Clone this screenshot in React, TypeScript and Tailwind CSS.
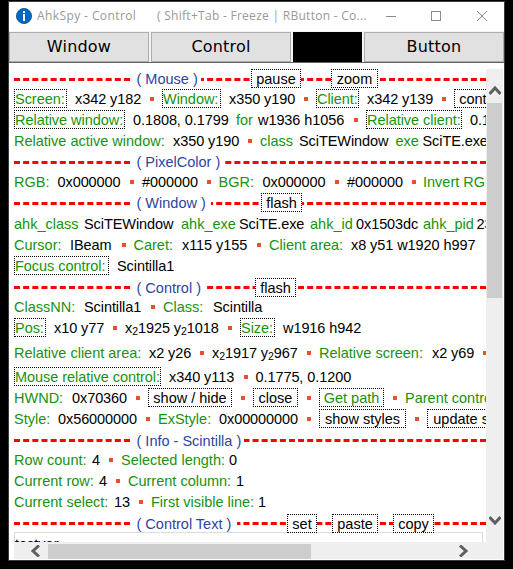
import type { ReactNode } from 'react';

type Kind = 'g' | 'k' | 'dot' | 'label' | 'btn' | 'gbtn';
type Seg = [Kind, string, string];

const styles: Record<Kind, string> = {
  g: 'text-[#189210]',
  k: 'text-black tracking-[-0.08px]',
  dot: 'text-[#e5502f]',
  label: 'text-[#189210] tracking-[-0.04px]',
  btn: 'text-black',
  gbtn: 'text-[#189210]',
};

function withSubscripts(text: string): ReactNode[] {
  return text.split(/(₂)/).map((part, i) =>
    part === '₂' ? (
      <span key={i} className="relative top-[2px] text-[10.5px]">2</span>
    ) : (
      part
    ),
  );
}

// The width class covers the item and the space that follows it.
function Segment({ seg: [kind, text, width] }: { seg: Seg }) {
  if (kind === 'dot') {
    return (
      <span className={`flex h-[19px] shrink-0 pt-2 ${width}`}>
        <span className="h-1 w-1 bg-[#e5502f]" />
      </span>
    );
  }
  if (kind === 'label') {
    return (
      <span className={`h-[19px] shrink-0 border border-dotted border-black ${styles[kind]} ${width}`}>
        <span className="block leading-[19px]">{text}</span>
      </span>
    );
  }
  if (kind === 'btn' || kind === 'gbtn') {
    return (
      <button className={`h-[19px] shrink-0 border border-dotted border-black text-center leading-[19px] ${styles[kind]} ${width}`}>
        {text}
      </button>
    );
  }
  return <span className={`shrink-0 leading-[21px] ${styles[kind]} ${width}`}>{withSubscripts(text)}</span>;
}

function Row({ height = 'h-[21px]', segs }: { height?: string; segs: Seg[] }) {
  return (
    <div className={`flex shrink-0 whitespace-pre ${height}`}>
      {segs.map((s, i) => (
        <Segment key={i} seg={s} />
      ))}
    </div>
  );
}

function Header({
  title,
  titleWidth,
  height = 'h-[21px]',
  line = 'pt-[9px]',
  children,
}: {
  title: string;
  titleWidth: string;
  height?: string;
  line?: string;
  children?: ReactNode;
}) {
  return (
    <div className={`grid shrink-0 grid-cols-1 grid-rows-1 whitespace-pre ${height}`}>
      <div className="col-start-1 row-start-1 flex min-h-0">
        <div className={`w-[116px] shrink-0 ${line}`}>
          <div className="border-t-[3px] border-dashed border-[#ff0000]" />
        </div>
        <div className={`shrink-0 pl-[6.500px] leading-[21px] text-[#2c45a0] ${titleWidth}`}>{title}</div>
        <div className={`flex min-w-0 flex-1 justify-end overflow-hidden ${line}`}>
          <div className="h-0 w-[288px] shrink-0 border-t-[3px] border-dashed border-[#ff0000]" />
        </div>
      </div>
      <div className="z-10 col-start-1 row-start-1 flex min-h-0">{children}</div>
    </div>
  );
}

function HeaderButton({ place, children }: { place: string; children: ReactNode }) {
  return (
    <button className={`h-[19px] shrink-0 border border-dotted border-black bg-white text-center leading-[19px] ${place}`}>
      {children}
    </button>
  );
}

function Chevron({ className, d }: { className: string; d: string }) {
  return (
    <svg viewBox="0 0 12 12" className={className} fill="none" stroke="#606060" strokeWidth="3">
      <path d={d} />
    </svg>
  );
}

export default function App() {
  return (
    <div className="flex h-[569px] w-[513px] overflow-hidden bg-black pl-2 pt-px">
      <div className="flex h-[560px] w-[497px] shrink-0 flex-col border border-[#3c3c3c] bg-white">
        <div className="flex h-[29px] shrink-0 items-center pb-px pl-[7px] font-['Open_Sans','Noto_Sans',sans-serif] text-[12px] text-[#999]">
          <svg viewBox="0 0 16 16" className="mr-[5px] h-4 w-4">
            <circle cx="8" cy="8" r="7.6" fill="#0067c0" stroke="#084f94" strokeWidth=".8" />
            <path d="M7 3h2v2H7zM7 6h2v7H7z" fill="#fff" />
          </svg>
          <span className="w-[120px] whitespace-pre tracking-[0.4px]">AhkSpy - Control</span>
          <span className="w-[229px] whitespace-pre tracking-[0.28px]">( Shift+Tab - Freeze | RButton - Co...</span>
          <svg viewBox="0 0 104 12" className="h-3 w-[104px]" fill="none" stroke="#8a8a8a" shapeRendering="crispEdges">
            <path d="M0 6.5h10M45.5 1.5h9v9h-9z" />
            <path d="M91 1l10 10M101 1l-10 10" shapeRendering="auto" />
          </svg>
        </div>
        <div className="flex h-[32px] shrink-0 gap-[2px] border-b border-[#646464] bg-[#f4f4f4] pt-px font-['DejaVu_Sans',sans-serif] text-[16px] tracking-[0.2px] text-black">
          <button className="h-[30px] w-[140px] border border-[#adadad] bg-[#e1e1e1]">Window</button>
          <button className="h-[30px] w-[140px] border border-[#adadad] bg-[#e1e1e1]">Control</button>
          <div className="h-[30px] w-[69px] bg-black" />
          <button className="h-[30px] w-[140px] border border-[#adadad] bg-[#e1e1e1]">Button</button>
        </div>
        <div className="flex min-h-0 flex-1 pb-px pl-[5px] pt-[6px]">
          <div className="flex w-[472px] shrink-0 flex-col font-['Liberation_Sans',Arial,sans-serif] text-[14.5px]">
            <div className="flex h-[473px] flex-col overflow-hidden">
              <Header title="( Mouse )" titleWidth="w-[71px]" height="h-5">
                <HeaderButton place="ml-[237px] w-[50px]">pause</HeaderButton>
                <HeaderButton place="ml-[30px] w-[47px]">zoom</HeaderButton>
              </Header>
              <Row segs={[['label', 'Screen:', 'w-[53px] mr-2'], ['k', 'x342 y182', 'w-[75px]'], ['dot', '', 'w-3'], ['label', 'Window:', 'w-[59px] mr-2'], ['k', 'x350 y190', 'w-[75px]'], ['dot', '', 'w-3'], ['label', 'Client:', 'w-[43px] mr-2'], ['k', 'x342 y139', 'w-[75px]'], ['dot', '', 'w-3'], ['btn', 'control', 'w-[54px]']]} />
              <Row segs={[['label', 'Relative window:', 'w-[111px] mr-2'], ['k', '0.1808, 0.1799', 'w-[103px]'], ['g', 'for', 'w-[22px]'], ['k', 'w1936 h1056', 'w-[96px]'], ['dot', '', 'w-3'], ['label', 'Relative client:', 'w-[96px] mr-2'], ['k', '0.1789', 'w-12']]} />
              <Row segs={[['g', 'Relative active window:', 'w-[159px]'], ['k', 'x350 y190', 'w-[75px]'], ['dot', '', 'w-3'], ['g', 'class', 'w-[39px]'], ['k', 'SciTEWindow', 'w-[96.500px]'], ['g', 'exe', 'w-[27px]'], ['k', 'SciTE.exe', 'w-20']]} />
              <Header title="( PixelColor )" titleWidth="w-[94px]" height="h-5" />
              <Row segs={[['g', 'RGB:', 'w-[43.500px]'], ['k', '0x000000', 'w-[72.500px]'], ['dot', '', 'w-3'], ['k', '#000000', 'w-[65px]'], ['dot', '', 'w-[11.500px]'], ['g', 'BGR:', 'w-[44px]'], ['k', '0x000000', 'w-[72.500px]'], ['dot', '', 'w-3'], ['k', '#000000', 'w-[65px]'], ['dot', '', 'w-[11px]'], ['g', 'Invert RGB:', 'w-24']]} />
              <Header title="( Window )" titleWidth="w-[81px]">
                <HeaderButton place="ml-[247px] w-[41px]">flash</HeaderButton>
              </Header>
              <Row segs={[['g', 'ahk_class', 'w-[70px]'], ['k', 'SciTEWindow', 'w-[97px]'], ['g', 'ahk_exe', 'w-[58px]'], ['k', 'SciTE.exe', 'w-[71px]'], ['g', 'ahk_id', 'w-[46px]'], ['k', '0x1503dc', 'w-[67px]'], ['g', 'ahk_pid', 'w-[53.500px]'], ['k', '2384', 'w-10']]} />
              <Row segs={[['g', 'Cursor:', 'w-[56px]'], ['k', 'IBeam', 'w-[52px]'], ['dot', '', 'w-[11.500px]'], ['g', 'Caret:', 'w-[48.500px]'], ['k', 'x115 y155', 'w-[75px]'], ['dot', '', 'w-[12px]'], ['g', 'Client area:', 'w-[82px]'], ['k', 'x8 y51 w1920 h997', 'w-[140px]']]} />
              <Row height="h-[22px]" segs={[['label', 'Focus control:', 'w-[95px] mr-2'], ['k', 'Scintilla1', 'w-20']]} />
              <Header title="( Control )" titleWidth="w-[76px]" height="h-[19px]" line="pt-2">
                <HeaderButton place="ml-[241px] w-[41px]">flash</HeaderButton>
              </Header>
              <Row segs={[['g', 'ClassNN:', 'w-[70px]'], ['k', 'Scintilla1', 'w-[67px]'], ['dot', '', 'w-3'], ['g', 'Class:', 'w-[50px]'], ['k', 'Scintilla', 'w-20']]} />
              <Row height="h-[25px]" segs={[['label', 'Pos:', 'w-8 mr-2'], ['k', 'x10 y77', 'w-[59px]'], ['dot', '', 'w-3'], ['k', 'x₂1925 y₂1018', 'w-[103px]'], ['dot', '', 'w-3'], ['label', 'Size:', 'w-[35px] mr-2'], ['k', 'w1916 h942', 'w-24']]} />
              <Row height="h-6" segs={[['g', 'Relative client area:', 'w-[135px]'], ['k', 'x2 y26', 'w-[51px]'], ['dot', '', 'w-3'], ['k', 'x₂1917 y₂967', 'w-[95px]'], ['dot', '', 'w-3'], ['g', 'Relative screen:', 'w-[113px]'], ['k', 'x2 y69', 'w-[51px]'], ['dot', '', 'w-3']]} />
              <Row segs={[['label', 'Mouse relative control:', 'w-[147px] mr-2'], ['k', 'x340 y113', 'w-[75px]'], ['dot', '', 'w-[11.500px]'], ['k', '0.1775, 0.1200', 'w-[110px]']]} />
              <Row segs={[['g', 'HWND:', 'w-[58px]'], ['k', '0x70360', 'w-[64px]'], ['dot', '', 'w-3'], ['btn', 'show / hide', 'w-[84px] mr-[9px]'], ['dot', '', 'w-3'], ['btn', 'close', 'w-[45px] mr-[9px]'], ['dot', '', 'w-3'], ['gbtn', 'Get path', 'w-[65px] mr-[9px]'], ['dot', '', 'w-3'], ['g', 'Parent control:', 'w-28']]} />
              <Row height="h-[22px]" segs={[['g', 'Style:', 'w-[44px]'], ['k', '0x56000000', 'w-[88px]'], ['dot', '', 'w-3'], ['g', 'ExStyle:', 'w-[61px]'], ['k', '0x00000000', 'w-[88px]'], ['dot', '', 'w-3'], ['btn', 'show styles', 'w-[87px] mr-[9px]'], ['dot', '', 'w-3'], ['btn', 'update styles', 'w-[98px]']]} />
              <Header title="( Info - Scintilla )" titleWidth="w-[114px]" height="h-[19px]" line="pt-2" />
              <Row segs={[['g', 'Row count:', 'w-[78px]'], ['k', '4', 'w-[17px]'], ['dot', '', 'w-3'], ['g', 'Selected length:', 'w-[108px]'], ['k', '0', 'w-3']]} />
              <Row segs={[['g', 'Current row:', 'w-[85px]'], ['k', '4', 'w-[17px]'], ['dot', '', 'w-3'], ['g', 'Current column:', 'w-[108px]'], ['k', '1', 'w-3']]} />
              <Row height="h-[22px]" segs={[['g', 'Current select:', 'w-[100px]'], ['k', '13', 'w-[25px]'], ['dot', '', 'w-3'], ['g', 'First visible line:', 'w-[107px]'], ['k', '1', 'w-3']]} />
              <Header title="( Control Text )" titleWidth="w-[107px]" height="h-[18px]" line="pt-2">
                <HeaderButton place="ml-[273px] w-[30px]">set</HeaderButton>
                <HeaderButton place="ml-[15px] w-[46px]">paste</HeaderButton>
                <HeaderButton place="ml-[15px] w-[41px]">copy</HeaderButton>
              </Header>
              <div className="mr-[3px] h-10 shrink-0 border border-[#dcdcdc] pt-[3px] leading-[17px] text-black">testvar</div>
            </div>
            <div className="flex h-[17px] items-center bg-[#efefef] pt-px">
              <div className="flex w-[34px] shrink-0 justify-end pr-[7px]">
                <Chevron className="h-3 w-3" d="M10 .5L4 6l6 5.5" />
              </div>
              <div className="h-[15px] w-[263px] bg-[#cdcdcd]" />
              <Chevron className="ml-[147px] h-3 w-3" d="M2 .5L8 6 2 11.500" />
            </div>
          </div>
          <div className="flex h-[490px] w-[17px] shrink-0 flex-col items-center bg-[#efefef]">
            <div className="flex h-[34px] items-end pb-[7px]">
              <Chevron className="h-3 w-3" d="M.5 10L6 4l5.500 6" />
            </div>
            <div className="h-[195px] w-[15px] bg-[#cdcdcd]" />
            <Chevron className="mt-[217px] h-3 w-3" d="M.5 2L6 8l5.500-6" />
          </div>
        </div>
      </div>
    </div>
  );
}
